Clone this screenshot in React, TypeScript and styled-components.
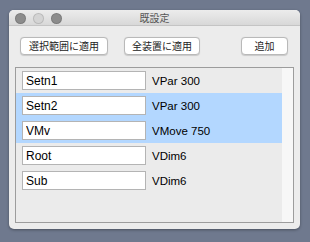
import React, { useState } from 'react';
import styled, { createGlobalStyle } from 'styled-components';

// Rows shown in the preset list
interface Preset {
  id: string;
  name: string;
  command: string;
}

const PRESETS: Preset[] = [
  { id: 'a', name: 'Setn1', command: 'VPar 300' },
  { id: 'b', name: 'Setn2', command: 'VPar 300' },
  { id: 'c', name: 'VMv', command: 'VMove 750' },
  { id: 'd', name: 'Root', command: 'VDim6' },
  { id: 'e', name: 'Sub', command: 'VDim6' },
];

export default function App() {
  const [selected] = useState<string[]>(['b', 'c']);

  return (
    <>
      <GlobalStyle />
      <Desktop>
        <Window>
          <TitleBar>
            <Lights>
              <Light $tone="#8c8c8c" />
              <Light $tone="#d4d4d4" />
              <Light $tone="#8c8c8c" />
            </Lights>
            <Title>既設定</Title>
          </TitleBar>

          <Toolbar>
            <PushButton $width={88}>選択範囲に適用</PushButton>
            <PushButton $width={76}>全装置に適用</PushButton>
            <Spacer />
            <PushButton $width={47}>追加</PushButton>
          </Toolbar>

          <ListBox>
            <Rows>
              {PRESETS.map((p) => (
                <Row key={p.id} $selected={selected.includes(p.id)}>
                  <NameField defaultValue={p.name} />
                  <Command>{p.command}</Command>
                </Row>
              ))}
            </Rows>
            <ScrollTrack />
          </ListBox>
        </Window>
      </Desktop>
    </>
  );
}

const GlobalStyle = createGlobalStyle`
  html, body {
    margin: 0;
    padding: 0;
    background: #6f798e;
  }
  * {
    box-sizing: border-box;
  }
`;

const Desktop = styled.div`
  width: 310px;
  height: 242px;
  padding: 10px 0 0 9px;
  background: #6f798e;
  font-family: "Liberation Sans", "Noto Sans CJK JP", sans-serif;
`;

const Window = styled.div`
  width: 291px;
  height: 219px;
  background: #ececec;
  border-radius: 5px;
  box-shadow: 0 1px 3px rgba(0, 0, 0, 0.35);
  display: flex;
  flex-direction: column;
  overflow: hidden;
`;

const TitleBar = styled.div`
  position: relative;
  height: 16px;
  flex: none;
  display: flex;
  align-items: center;
  justify-content: center;
  background: linear-gradient(#ececec, #d8d8d8);
  border-bottom: 1px solid #c4c4c4;
`;

const Lights = styled.div`
  position: absolute;
  left: 6px;
  top: 3px;
  display: flex;
  gap: 7px;
`;

const Light = styled.span<{ $tone: string }>`
  width: 11px;
  height: 11px;
  border-radius: 50%;
  background: ${(p) => p.$tone};
  border: 1px solid rgba(0, 0, 0, 0.12);
`;

const Title = styled.div`
  font-family: "Noto Sans CJK JP", sans-serif;
  font-size: 10px;
  color: #555;
  line-height: 16px;
`;

const Toolbar = styled.div`
  display: flex;
  align-items: center;
  gap: 16px;
  padding: 11px 12px 0 11px;
  height: 29px;
  flex: none;
`;

const Spacer = styled.div`
  flex: 1;
`;

const PushButton = styled.button<{ $width: number }>`
  width: ${(p) => p.$width}px;
  height: 18px;
  padding: 0;
  background: #fff;
  border: 1px solid #b9b9b9;
  border-radius: 4px;
  box-shadow: 0 0.5px 1px rgba(0, 0, 0, 0.15);
  font-family: "Noto Sans CJK JP", sans-serif;
  font-size: 10px;
  line-height: 16px;
  color: #222;
`;

const ListBox = styled.div`
  margin: 12px 6px 6px 6px;
  flex: 1;
  display: flex;
  border: 1px solid #9c9c9c;
  background: #ebebeb;
`;

const Rows = styled.div`
  flex: 1;
  display: flex;
  flex-direction: column;
`;

const Row = styled.div<{ $selected: boolean }>`
  height: 25px;
  display: flex;
  align-items: center;
  gap: 6px;
  padding-left: 6px;
  background: ${(p) => (p.$selected ? '#b3d7ff' : 'transparent')};
`;

const NameField = styled.input`
  width: 124px;
  height: 19px;
  padding: 0 3px;
  border: 1px solid #b4b4b4;
  background: #fff;
  font-family: "Liberation Sans", sans-serif;
  font-size: 12px;
  color: #000;
  outline: none;
`;

const Command = styled.span`
  font-size: 11.5px;
  color: #000;
`;

const ScrollTrack = styled.div`
  width: 11px;
  flex: none;
  background: #f7f7f7;
`;
